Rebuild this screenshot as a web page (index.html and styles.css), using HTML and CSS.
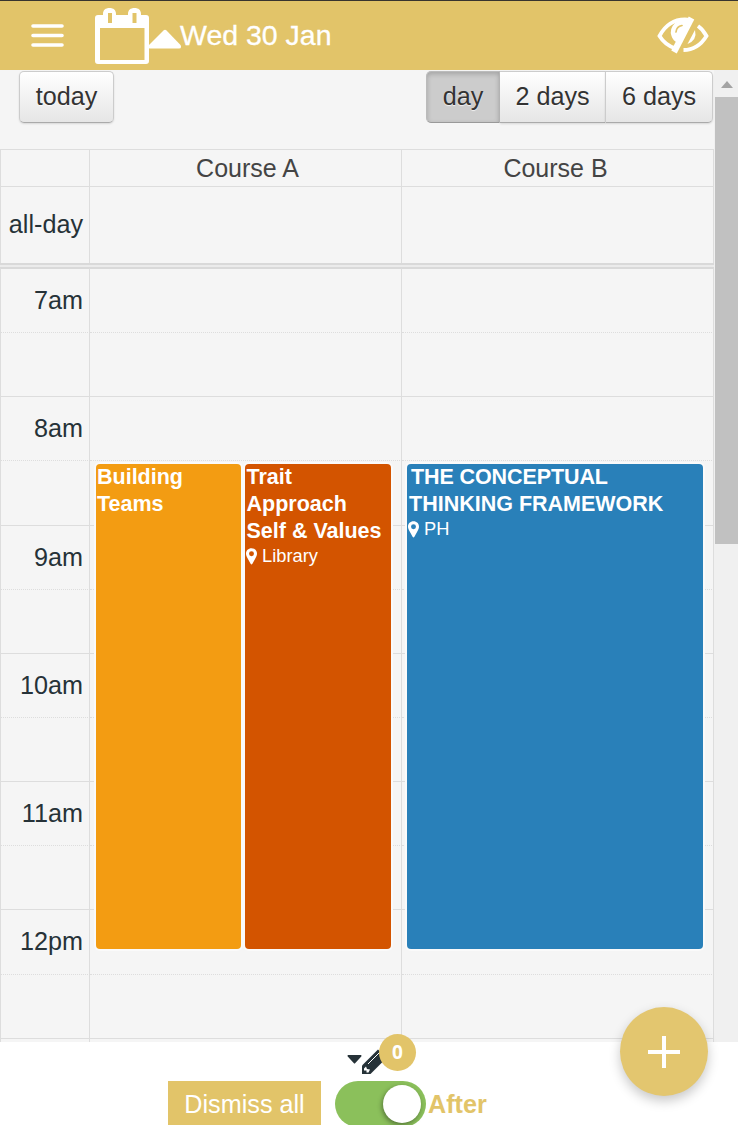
FILE: index.html
```html
<!DOCTYPE html>
<html lang="en">
<head>
<meta charset="utf-8">
<title>Calendar</title>
<link rel="stylesheet" href="styles.css">
</head>
<body>
<div class="app">
  <header class="topbar">
    <svg class="menu-icon" width="33" height="24" viewBox="0 0 33 24"><path d="M2 2H31M2 11.500H31M2 21H31" stroke="#fff" stroke-width="3.600" stroke-linecap="round"/></svg>
    <svg class="calendar-icon" width="54" height="57" viewBox="0 0 54 57">
      <path fill="#fff" fill-rule="evenodd" d="M3 8H8V7C8 3 10.500 1 14.500 1S21 3 21 7V8H33V7C33 3 35.500 1 39.500 1S46 3 46 7V8H51Q54 8 54 11V54Q54 57 51 57H3Q0 57 0 54V11Q0 8 3 8ZM5 21V53H49.500V21ZM13 6V16H17V6ZM37.500 6V16H41.500V6Z"/>
    </svg>
    <svg class="caret-up" width="34" height="20" viewBox="0 0 34 20"><path d="M15.500 1.500Q17 0 18.500 1.500L32.500 16Q34 19.500 31 19.500H2Q-1 19.500 1 16Z" fill="#fff"/></svg>
    <span class="date">Wed 30 Jan</span>
    <svg class="eye-icon" width="52" height="40" viewBox="0 0 52 40">
      <path d="M33 4.800C20 3 9.500 8 2.500 21Q8 30 18.500 33.500M41 11Q46 14.500 49.500 21C44 30 37 35 26.500 35" fill="none" stroke="#fff" stroke-width="3.800"/>
      <path d="M33 4.500Q24 3 18 8Q12 14 14.500 21Q16 26 21 28Z" fill="#fff"/>
      <path d="M19 17Q19.500 11.500 25 10.500" fill="none" stroke="#e2c469" stroke-width="1.700" stroke-linecap="round"/>
      <path d="M38 15Q40.500 25 30.500 29Z" fill="#fff"/>
      <path d="M34.500 3L17 37" stroke="#fff" stroke-width="6.200"/>
    </svg>
  </header>
  <main class="viewport">
    <section class="calendar">
      <div class="toolbar">
        <button class="btn">today</button>
        <div class="views"><button class="btn day active">day</button><button class="btn two">2 days</button><button class="btn six">6 days</button></div>
      </div>
      <div class="row heads"><div></div><div>Course A</div><div>Course B</div></div>
      <div class="row allday"><div>all-day</div><div></div><div></div></div>
      <div class="divider"></div>
      <div class="slots">
        <div class="row slot"><div>7am</div><div></div><div></div></div>
        <div class="row slot minor"><div></div><div></div><div></div></div>
        <div class="row slot"><div>8am</div><div></div><div></div></div>
        <div class="row slot minor"><div></div><div></div><div></div></div>
        <div class="row slot"><div>9am</div><div></div><div></div></div>
        <div class="row slot minor"><div></div><div></div><div></div></div>
        <div class="row slot"><div>10am</div><div></div><div></div></div>
        <div class="row slot minor"><div></div><div></div><div></div></div>
        <div class="row slot"><div>11am</div><div></div><div></div></div>
        <div class="row slot minor"><div></div><div></div><div></div></div>
        <div class="row slot"><div>12pm</div><div></div><div></div></div>
        <div class="row slot minor"><div></div><div></div><div></div></div>
        <div class="row slot"><div></div><div></div><div></div></div>
        <div class="events">
          <article class="event orange"><b>Building<br>Teams</b></article>
          <article class="event rust"><b>Trait<br>Approach<br>Self &amp; Values</b>
            <span class="place"><svg width="11" height="17" viewBox="0 0 12 18"><path fill="#fff" fill-rule="evenodd" d="M6 0C2.500 0 0 2.500 0 6C0 8 1 9.500 2 11.500L5 17Q6 18.500 7 17L10 11.500C11 9.500 12 8 12 6C12 2.500 9.500 0 6 0ZM6 3.300A2.700 2.700 0 1 1 6 8.700A2.700 2.700 0 1 1 6 3.300Z"/></svg>Library</span></article>
          <article class="event blue"><b>THE CONCEPTUAL<br>THINKING FRAMEWORK</b>
            <span class="place"><svg width="11" height="17" viewBox="0 0 12 18"><path fill="#fff" fill-rule="evenodd" d="M6 0C2.500 0 0 2.500 0 6C0 8 1 9.500 2 11.500L5 17Q6 18.500 7 17L10 11.500C11 9.500 12 8 12 6C12 2.500 9.500 0 6 0ZM6 3.300A2.700 2.700 0 1 1 6 8.700A2.700 2.700 0 1 1 6 3.300Z"/></svg>PH</span></article>
        </div>
      </div>
    </section>
    <div class="scrollbar"><svg class="scroll-up" width="12" height="7" viewBox="0 0 12 7"><path d="M0 7L6 0L12 7Z" fill="#a3a3a3"/></svg><div class="thumb"></div></div>
  </main>
  <footer class="footer">
    <div class="edit">
      <svg class="caret-down" width="15" height="9" viewBox="0 0 15 9"><path d="M1 0H14Q15 .5 14.300 1.500L8.300 8Q7.500 9 6.700 8L.7 1.500Q0 .5 1 0Z" fill="#263238"/></svg>
      <svg class="pencil" width="25" height="25" viewBox="0 0 25 25"><path d="M0 25V16.500L16 .5L24.500 9L8.500 25Z" fill="#263238"/><path d="M6 15L18 3" stroke="#fff" stroke-width="1"/><path d="M2 19.500L4 17.500L5 20L8 20.500L6.500 23.500L4.500 23.500V21.500H2Z" fill="#fff"/></svg>
      <span class="badge">0</span>
    </div>
    <div class="actions">
      <button class="dismiss">Dismiss all</button>
      <span class="switch"><span class="knob"></span></span>
      <b class="after">After</b>
    </div>
  </footer>
  <button class="fab"><svg width="32" height="32" viewBox="0 0 32 32"><path d="M0 16H32M16 0V32" stroke="#fff" stroke-width="4"/></svg></button>
</div>
</body>
</html>
```
FILE: styles.css
```css
* { box-sizing: border-box; }
body { margin: 0; font-family: "Liberation Sans", Arial, sans-serif; font-size: 25.2px; color: #263238; }
button { font: inherit; border: 0; padding: 0; margin: 0; }
svg { display: block; flex: none; }
.app { position: relative; height: 1125px; overflow: hidden; background: #fff; display: flex; flex-direction: column; }

.topbar { height: 70px; flex: none; background: #e2c469; border-top: 1px solid #38342e; display: flex; align-items: flex-start; color: #fff; }
.menu-icon { margin: 23px 0 0 31px; }
.calendar-icon { margin: 6px 0 0 30.5px; }
.caret-up { margin: 27.500px 0 0 -1px; }
.date { margin: 17px 0 0 -1.5px; font-size: 28.5px; line-height: 34px; white-space: nowrap; -webkit-text-stroke: .3px #fff; }
.eye-icon { margin: 14px 29px 0 auto; }

.viewport { height: 972px; flex: none; display: flex; background: #f5f5f5; overflow: hidden; }
.calendar { width: 714px; flex: none; }
.toolbar { height: 79px; padding: 1px 1px 0 19px; display: flex; justify-content: space-between; align-items: flex-start; }
.btn { height: 52px; padding: 0 0 2px; width: 95px; color: #333; background: linear-gradient(#fff, #e6e6e6); border: 1px solid #ccc; border-bottom-color: #aaa; border-radius: 5px; box-shadow: 0 1px 2px rgba(0,0,0,.12); text-shadow: 0 1px 1px rgba(255,255,255,.75); }
.views { display: flex; }
.views .btn { border-radius: 0; border-right-width: 0; }
.views .day { width: 74px; border-radius: 5px 0 0 5px; }
.views .two { width: 105px; border-left-width: 0; }
.views .six { width: 108px; border-left-width: 1px; border-right-width: 1px; border-radius: 0 5px 5px 0; }
.views .active { background: #ccc; border-color: #bbb #bbb #999; border-right-width: 1px; box-shadow: inset 0 2px 5px rgba(0,0,0,.2); }

.row { display: grid; grid-template-columns: 90px 312px 312px; }
.row > div { border-right: 1px solid #ddd; border-top: 1px solid #ddd; }
.row > div:first-child { border-left: 1px solid #ddd; text-align: right; padding-right: 6px; white-space: nowrap; }
.heads { height: 37px; text-align: center; line-height: 37px; color: #444; font-size: 25px; }
.heads > div:nth-child(2) { padding-left: 4px; }
.heads > div:nth-child(3) { padding-right: 4px; }
.allday { height: 77px; line-height: 75px; }
.divider { height: 6px; border: solid #d9d9d9; border-width: 2px 0; background: #ebebeb; }
.slots { position: relative; margin-top: -1px; }
.slot { height: 64.15px; line-height: 63px; }
.slot:first-child > div { border-top-color: transparent; }
.minor > div { border-top: 1px dotted #ddd; }
.events { position: absolute; top: 196px; left: 96px; width: 607px; height: 485px; display: grid; grid-template-columns: 145px 146px 296px; column-gap: 4px; color: #fff; }
.event { border-radius: 4px; box-shadow: 0 0 0 2px #fafafa; font-size: 21.5px; line-height: 27px; white-space: nowrap; overflow: hidden; padding-left: 1px; }
.event b { display: block; }
.orange { background: #f39c12; }
.rust { background: #d35400; }
.rust b, .blue b { padding-left: .5px; }
.blue { background: #2980b9; margin-left: 12px; width: 296px; }
.blue b { padding-left: 1px; }
.blue b::first-line { letter-spacing: -.1px; }
.blue b { text-indent: 2px; }
.place { display: flex; align-items: center; gap: 5px; font-size: 18.3px; line-height: 24px; margin-top: -1px; }

.scrollbar { flex: 1; padding-left: 1px; background: #f0f0f0; }
.scroll-up { margin: 11px 0 9px 6px; }
.thumb { height: 447px; background: #c1c1c1; }

.footer { flex: 1; }
.edit { position: relative; height: 39px; padding-left: 347px; display: flex; align-items: flex-start; }
.caret-down { margin-top: 13px; }
.pencil { margin-top: 7px; }
.badge { position: absolute; left: 379px; top: -8px; width: 37px; height: 37px; border-radius: 50%; background: #e2c469; color: #fff; font: bold 19px/37px "Open Sans", sans-serif; text-align: center; }
.actions { display: flex; height: 46px; padding-left: 168px; }
.dismiss { width: 153px; height: 46px; background: #e2c469; color: #fff; }
.switch { width: 91px; height: 46px; margin-left: 14px; border-radius: 23px; background: #8bc05b; padding: 4px 5px; display: flex; justify-content: flex-end; }
.knob { width: 38px; height: 38px; border-radius: 50%; background: #fff; box-shadow: -1px 2px 5px rgba(0,0,0,.4); }
.after { margin-left: 2px; line-height: 46px; color: #e2c469; }
.fab { position: absolute; left: 620px; top: 1007px; width: 88px; height: 89px; border-radius: 50%; background: #e3c66f; box-shadow: 0 5px 12px rgba(0,0,0,.22); display: flex; align-items: center; justify-content: center; }
```
